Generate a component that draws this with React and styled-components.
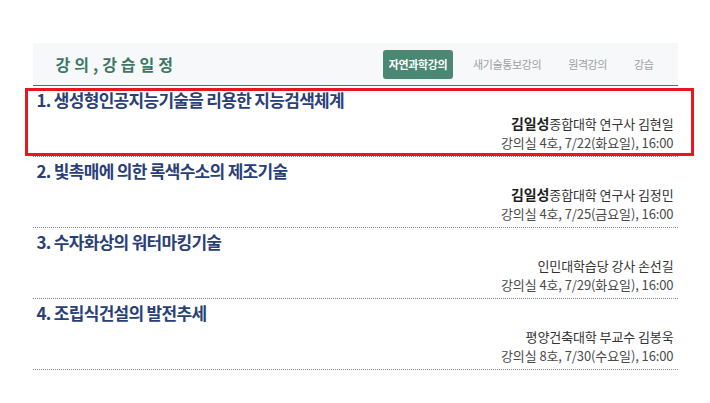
import styled, { createGlobalStyle } from "styled-components";

const GlobalStyle = createGlobalStyle`
  body {
    margin: 0;
    background: #ffffff;
    font-family: "Noto Sans CJK KR", "Noto Sans", sans-serif;
  }
`;

const Page = styled.div`
  width: 645px;
  margin: 43px auto 0;
`;

const Header = styled.div`
  display: flex;
  align-items: center;
  justify-content: space-between;
  height: 42px;
  padding: 0 17px 0 23px;
  background: #f6f8f9;
  border-bottom: 1px solid #557068;
`;

const Title = styled.h2`
  margin: 0;
  font-size: 16px;
  font-weight: 700;
  letter-spacing: 4px;
  color: #3d7765;
`;

const Tabs = styled.nav`
  display: flex;
  align-items: center;
  gap: 13px;
`;

const Tab = styled.a`
  display: flex;
  align-items: center;
  height: 29px;
  padding: 0 ${(p) => (p.$active ? "6px" : "7px")};
  border-radius: 3px;
  font-size: 11px;
  letter-spacing: -0.4px;
  font-weight: ${(p) => (p.$active ? 700 : 400)};
  color: ${(p) => (p.$active ? "#ffffff" : "#a0a0a0")};
  background: ${(p) => (p.$active ? "#4a8873" : "transparent")};
`;

const List = styled.ul`
  list-style: none;
  margin: 0;
  padding: 0;
`;

const Item = styled.li`
  position: relative;
  height: 71px;
  box-sizing: border-box;
  padding: 3px 4px 4px;
  border-bottom: 1px dotted #8a8a8a;

  ${(p) =>
    p.$marked &&
    `
    &::after {
      content: "";
      position: absolute;
      left: -8px;
      right: -16px;
      top: 2px;
      bottom: 0;
      border: 3px solid #e8161f;
    }
  `}
`;

const ItemTitle = styled.div`
  font-size: 17px;
  line-height: 22px;
  font-weight: 700;
  letter-spacing: -0.7px;
  color: #2a3f78;
`;

const Meta = styled.div`
  margin-top: 3px;
  text-align: right;
  font-size: 13px;
  line-height: 19px;
  letter-spacing: -0.1px;
  color: ${(p) => (p.$muted ? "#4a4a4a" : "#333333")};

  & + & {
    margin-top: 0;
  }

  b {
    font-weight: 700;
    font-size: 14px;
    line-height: 1;
    color: #1e1e1e;
  }
`;

const lectures = [
  {
    title: "1. 생성형인공지능기술을 리용한 지능검색체계",
    uni: "김일성",
    who: "종합대학 연구사 김현일",
    when: "강의실 4호, 7/22(화요일), 16:00",
  },
  {
    title: "2. 빛촉매에 의한 록색수소의 제조기술",
    uni: "김일성",
    who: "종합대학 연구사 김정민",
    when: "강의실 4호, 7/25(금요일), 16:00",
  },
  {
    title: "3. 수자화상의 워터마킹기술",
    who: "인민대학습당 강사 손선길",
    when: "강의실 4호, 7/29(화요일), 16:00",
  },
  {
    title: "4. 조립식건설의 발전추세",
    who: "평양건축대학 부교수 김봉욱",
    when: "강의실 8호, 7/30(수요일), 16:00",
  },
];

const tabs = ["자연과학강의", "새기술통보강의", "원격강의", "강습"];

export default function App() {
  return (
    <>
      <GlobalStyle />
      <Page>
        <Header>
          <Title>강의,강습일정</Title>
          <Tabs>
            {tabs.map((t, i) => (
              <Tab key={t} $active={i === 0}>
                {t}
              </Tab>
            ))}
          </Tabs>
        </Header>
        <List>
          {lectures.map((l, i) => (
            <Item key={l.title} $marked={i === 0}>
              <ItemTitle>{l.title}</ItemTitle>
              <Meta>
                {l.uni && <b>{l.uni}</b>}
                {l.who}
              </Meta>
              <Meta $muted>{l.when}</Meta>
            </Item>
          ))}
        </List>
      </Page>
    </>
  );
}
